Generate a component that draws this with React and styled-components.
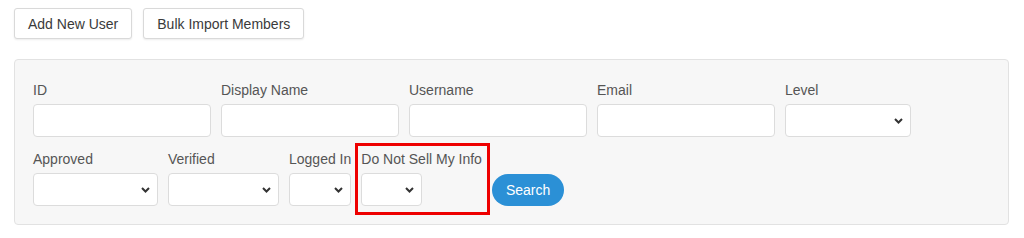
import styled, { createGlobalStyle } from "styled-components";

const GlobalStyle = createGlobalStyle`
  body {
    margin: 0;
    background: #fff;
    font-family: "Liberation Sans", Arial, sans-serif;
  }
`;

const Page = styled.div`
  padding: 8px 15px 0 14px;
`;

const Toolbar = styled.div`
  display: flex;
  gap: 11px;
  margin-bottom: 20px;
`;

const ActionButton = styled.button`
  height: 31px;
  padding: 0 13px;
  background: #fff;
  border: 1px solid #d9d9d9;
  border-radius: 3px;
  box-shadow: 0 1px 2px rgba(0, 0, 0, 0.08);
  font-family: inherit;
  font-size: 14px;
  color: #3a3a3a;
  cursor: pointer;
`;

const Panel = styled.form`
  background: #f7f7f7;
  border: 1px solid #e2e2e2;
  border-radius: 4px;
  padding: 20px 18px 18px;
  display: flex;
  flex-direction: column;
  gap: 12px;
`;

const Row = styled.div`
  display: flex;
  align-items: flex-end;
  gap: 10px;
`;

const Field = styled.div`
  position: relative;
  display: flex;
  flex-direction: column;
  gap: 4px;

  ${(p) =>
    p.$highlight &&
    `
    &::after {
      content: "";
      position: absolute;
      left: -6px;
      right: -8px;
      top: -6px;
      bottom: -9px;
      border: 3px solid #ee0000;
      pointer-events: none;
    }
  `}
`;

const Label = styled.label`
  font-size: 14px;
  line-height: 20px;
  color: #555;
  white-space: nowrap;
`;

const TextInput = styled.input`
  box-sizing: border-box;
  width: ${(p) => p.$w}px;
  height: 33px;
  background: #fff;
  border: 1px solid #dcdcdc;
  border-radius: 4px;
  padding: 0 8px;
  font-family: inherit;
  font-size: 14px;
  outline: none;
`;

const SelectWrap = styled.div`
  position: relative;
  width: ${(p) => p.$w}px;
  height: 33px;

  svg {
    position: absolute;
    right: 8px;
    top: 50%;
    transform: translateY(-50%);
    pointer-events: none;
  }
`;

const Select = styled.select`
  appearance: none;
  box-sizing: border-box;
  width: 100%;
  height: 100%;
  background: #fff;
  border: 1px solid #dcdcdc;
  border-radius: 4px;
  padding: 0 8px;
  font-family: inherit;
  font-size: 14px;
  outline: none;
`;

const SearchButton = styled.button`
  height: 32px;
  padding: 0 14px;
  background: #2b90d6;
  color: #fff;
  border: none;
  border-radius: 16px;
  font-family: inherit;
  font-size: 14px;
  cursor: pointer;
`;

const Chevron = () => (
  <svg width="9" height="6" viewBox="0 0 9 6">
    <path d="M1 1l3.5 3.5L8 1" fill="none" stroke="#333" strokeWidth="2" />
  </svg>
);

const DropDown = ({ w }) => (
  <SelectWrap $w={w}>
    <Select>
      <option value=""></option>
    </Select>
    <Chevron />
  </SelectWrap>
);

const App = () => (
  <Page>
    <GlobalStyle />
    <Toolbar>
      <ActionButton>Add New User</ActionButton>
      <ActionButton>Bulk Import Members</ActionButton>
    </Toolbar>
    <Panel onSubmit={(e) => e.preventDefault()}>
      <Row>
        {["ID", "Display Name", "Username", "Email"].map((name) => (
          <Field key={name}>
            <Label>{name}</Label>
            <TextInput $w={178} />
          </Field>
        ))}
        <Field>
          <Label>Level</Label>
          <DropDown w={126} />
        </Field>
      </Row>
      <Row>
        <Field>
          <Label>Approved</Label>
          <DropDown w={125} />
        </Field>
        <Field>
          <Label>Verified</Label>
          <DropDown w={111} />
        </Field>
        <Field>
          <Label>Logged In</Label>
          <DropDown w={62} />
        </Field>
        <Field $highlight>
          <Label>Do Not Sell My Info</Label>
          <DropDown w={61} />
        </Field>
        <SearchButton type="submit">Search</SearchButton>
      </Row>
    </Panel>
  </Page>
);

export default App;
